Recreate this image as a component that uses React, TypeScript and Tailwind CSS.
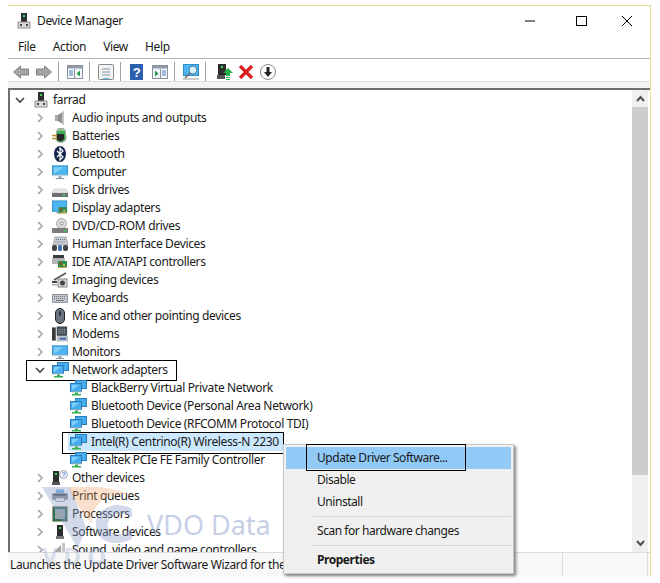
import type { ReactNode } from 'react';

const Pc = ({ base = '#8a8a8a' }: { base?: string }) => (
  <svg className="shrink-0" width="16" height="16" viewBox="0 0 16 16">
    <rect x="5" y="0" width="6" height="9" fill="#2f2f2f" />
    <rect x="7" y="2" width="2" height="2" fill="#3ddc5a" />
    <path d="M2 9h12v6H2z" fill="#d9d9d9" stroke={base} />
    <rect x="4" y="11" width="2" height="2" fill="#444" />
    <rect x="10" y="11" width="2" height="2" fill="#444" />
  </svg>
);
const Audio = () => (
  <svg width="16" height="16" viewBox="0 0 16 16">
    <rect x="3" y="5" width="3" height="6" fill="#a8a8a8" />
    <path d="M6 5l6-4v14l-6-4z" fill="#8f8f8f" />
    <path d="M10 2.500l2-1.500v14l-2-1.500z" fill="#c4c4c4" />
  </svg>
);
const Battery = () => (
  <svg width="16" height="16" viewBox="0 0 16 16">
    <path d="M5 2c0-2 8-2 8 0l1 8c0 5-9 6-10 1z" fill="#3fae52" stroke="#9a9a9a" />
    <path d="M5 6h7v5c-2 3-6 3-7 0z" fill="#262626" />
    <path d="M0 7.500h5M0 10.500h5" stroke="#b8942e" strokeWidth="1.500" />
    <path d="M5 2h8" stroke="#d8d8d8" />
  </svg>
);
const Bluetooth = () => (
  <svg width="16" height="16" viewBox="0 0 16 16">
    <ellipse cx="8" cy="8" rx="6" ry="8" fill="#12264d" />
    <path d="M5 5l6 6-3 3V2l3 3-6 6" fill="none" stroke="#fff" strokeWidth="1.200" />
  </svg>
);
const Monitor = () => (
  <svg width="17" height="16" viewBox="0 0 17 16">
    <rect x="0.500" y="1.500" width="16" height="10" fill="#4db6f2" stroke="#2f8fc9" />
    <path d="M2 3h10L2 10z" fill="#7fd0f8" />
    <rect x="0" y="11" width="17" height="1.500" fill="#c8d4dc" />
    <rect x="7" y="12.500" width="3" height="2" fill="#8d9aa3" />
    <rect x="4" y="14.500" width="9" height="1" fill="#7d8b94" />
  </svg>
);
const Disk = () => (
  <svg width="16" height="16" viewBox="0 0 16 16">
    <path d="M2 7h12l2 4H0z" fill="#e6e6e6" stroke="#bdbdbd" strokeWidth="0.500" />
    <rect x="0" y="11" width="16" height="4" fill="#6f6f6f" />
    <rect x="11" y="12" width="2" height="2" fill="#39d353" />
  </svg>
);
const Card = ({ x = 7, y = 8 }: { x?: number; y?: number }) => (
  <g>
    <rect x={x} y={y} width="9" height="6" fill="#2f8f55" />
    <rect x={x + 1} y={y + 1} width="3" height="3" fill="#7a5f22" />
    <rect x={x + 5} y={y + 3} width="2" height="2" fill="#c9b24a" />
    <rect x={x} y={y + 6} width="9" height="1" fill="#d0a93a" />
  </g>
);
const Display = () => (
  <svg width="17" height="16" viewBox="0 0 17 16">
    <rect x="0.500" y="0.500" width="15" height="11" fill="#4db6f2" stroke="#2f8fc9" />
    <rect x="5" y="12" width="5" height="2" fill="#8d9aa3" />
    <Card x={7} y={7} />
  </svg>
);
const Dvd = () => (
  <svg width="16" height="16" viewBox="0 0 16 16">
    <circle cx="9.500" cy="5.500" r="5" fill="#dcdcdc" stroke="#a5a5a5" />
    <circle cx="9.500" cy="5.500" r="1.500" fill="#fff" stroke="#888" />
    <rect x="0" y="10" width="16" height="5" fill="#7d7d7d" />
    <rect x="12" y="12" width="2" height="1.500" fill="#39d353" />
  </svg>
);
const Hid = () => (
  <svg width="16" height="16" viewBox="0 0 16 16">
    <path d="M3 1h11l2 8H1z" fill="#c8cdd3" stroke="#8d949c" strokeWidth="0.700" />
    <path d="M4 3.500h9M3.500 6h10" stroke="#6f757c" strokeDasharray="1 1" />
    <rect x="0" y="9" width="5" height="6" rx="2" fill="#444" />
    <rect x="6" y="9" width="4" height="6" rx="1.500" fill="#3f6fb5" />
    <rect x="11" y="9" width="5" height="6" rx="2" fill="#444" />
  </svg>
);
const Ide = () => (
  <svg width="16" height="16" viewBox="0 0 16 16">
    <path d="M1 1h11v3H1z" fill="#3a3a3a" />
    <rect x="0" y="4" width="13" height="6" fill="#b5b5b5" />
    <Card x={6} y={7} />
  </svg>
);
const Imaging = () => (
  <svg width="16" height="16" viewBox="0 0 16 16">
    <path d="M2 8L14 1" stroke="#555" strokeWidth="1.500" />
    <rect x="0" y="9" width="5" height="2" fill="#3f3f3f" />
    <rect x="0" y="12" width="5" height="1.500" fill="#aaa" />
    <rect x="6" y="7" width="9" height="8" fill="#d8d8d8" stroke="#888" />
    <circle cx="10.500" cy="11" r="2.500" fill="#444" />
  </svg>
);
const Keyboard = () => (
  <svg width="16" height="16" viewBox="0 0 16 16">
    <path d="M0.500 4.500h15v8h-15z" fill="#c4c9cf" stroke="#8d949c" />
    <path d="M2 6.500h12M2 8.500h12" stroke="#72777d" strokeDasharray="1 1" />
    <path d="M4 10.500h8" stroke="#72777d" />
  </svg>
);
const Mouse = () => (
  <svg width="16" height="16" viewBox="0 0 16 16">
    <rect x="3.500" y="0.500" width="9" height="15" rx="4.500" fill="#6d7680" stroke="#222" />
    <rect x="7" y="3" width="2" height="5" rx="1" fill="#2f3338" />
  </svg>
);
const Modem = () => (
  <svg width="17" height="16" viewBox="0 0 17 16">
    <path d="M0 1h4v14H0z" fill="#3a3a3a" />
    <rect x="5" y="0" width="11" height="10" fill="#3f4a54" />
    <path d="M7 3h7M7 5h7M7 7h7" stroke="#b9c2ca" strokeDasharray="1 1" />
    <rect x="5" y="10" width="12" height="6" fill="#bcc3c9" />
    <rect x="8" y="12" width="7" height="2" fill="#3b6aa8" />
  </svg>
);
const Network = () => (
  <svg className="shrink-0" width="17" height="16" viewBox="0 0 17 16">
    <rect x="5.500" y="0.500" width="11" height="8" fill="#46aef0" stroke="#2a7db8" />
    <rect x="0.500" y="3.500" width="11" height="8" fill="#46aef0" stroke="#2a7db8" />
    <path d="M2 5h7L2 10z" fill="#7fd0f8" />
    <rect x="1" y="11.500" width="11" height="1" fill="#c8d4dc" />
    <rect x="5" y="12.500" width="3" height="1.500" fill="#35b04a" />
    <rect x="2" y="14" width="9" height="1.500" fill="#35b04a" />
  </svg>
);
const Other = () => (
  <svg width="16" height="16" viewBox="0 0 16 16">
    <rect x="1" y="1" width="6" height="11" fill="#2f2f2f" />
    <rect x="3" y="3" width="2" height="2" fill="#3ddc5a" />
    <rect x="0" y="12" width="8" height="3" fill="#555" />
    <circle cx="11.500" cy="4.500" r="4" fill="#eef3fa" stroke="#9aa6b5" />
    <text x="11.500" y="7" fontSize="7" textAnchor="middle" fill="#2d5ea8" fontFamily="Liberation Sans, sans-serif">?</text>
  </svg>
);
const Printer = () => (
  <svg width="17" height="16" viewBox="0 0 17 16">
    <rect x="4" y="1" width="9" height="4" fill="#6fb4e0" />
    <rect x="0" y="5" width="17" height="7" fill="#8b9096" />
    <rect x="2" y="6" width="13" height="1.500" fill="#3b3f44" />
    <rect x="4" y="10" width="9" height="4" fill="#f2f2f2" stroke="#777" strokeWidth="0.600" />
  </svg>
);
const Cpu = () => (
  <svg width="16" height="16" viewBox="0 0 16 16">
    <rect x="0.500" y="0.500" width="15" height="15" fill="#2f6f66" stroke="#b89a3a" strokeDasharray="1 1" />
    <rect x="3" y="3" width="10" height="10" fill="#9aa7a5" />
  </svg>
);
const Software = () => (
  <svg width="16" height="16" viewBox="0 0 16 16">
    <rect x="5" y="1" width="6" height="11" fill="#2b2b2b" />
    <rect x="7" y="3" width="2" height="2" fill="#3ddc5a" />
    <rect x="4" y="12" width="8" height="3" fill="#777" />
  </svg>
);
const Sound = () => (
  <svg width="16" height="16" viewBox="0 0 16 16">
    <path d="M3 9l6-6v12H3z" fill="#a5a5a5" />
    <rect x="10" y="1" width="3" height="14" fill="#c7c7c7" />
  </svg>
);

const Chevron = ({ open }: { open?: boolean }) => (
  <svg width="10" height="10" viewBox="0 0 10 10" fill="none" stroke={open ? '#444' : '#a6a6a6'} strokeWidth="1.600">
    {open ? <path d="M1 3l4 4 4-4" /> : <path d="M3 1l4 4-4 4" />}
  </svg>
);

const categories: [string, ReactNode][] = [
  ['Audio inputs and outputs', <Audio />],
  ['Batteries', <Battery />],
  ['Bluetooth', <Bluetooth />],
  ['Computer', <Monitor />],
  ['Disk drives', <Disk />],
  ['Display adapters', <Display />],
  ['DVD/CD-ROM drives', <Dvd />],
  ['Human Interface Devices', <Hid />],
  ['IDE ATA/ATAPI controllers', <Ide />],
  ['Imaging devices', <Imaging />],
  ['Keyboards', <Keyboard />],
  ['Mice and other pointing devices', <Mouse />],
  ['Modems', <Modem />],
  ['Monitors', <Monitor />],
];
const adapters = [
  'BlackBerry Virtual Private Network',
  'Bluetooth Device (Personal Area Network)',
  'Bluetooth Device (RFCOMM Protocol TDI)',
  'Intel(R) Centrino(R) Wireless-N 2230',
  'Realtek PCIe FE Family Controller',
];
const after: [string, ReactNode][] = [
  ['Other devices', <Other />],
  ['Print queues', <Printer />],
  ['Processors', <Cpu />],
  ['Software devices', <Software />],
  ['Sound, video and game controllers', <Sound />],
];

const Row = ({ icon, label, open }: { icon: ReactNode; label: string; open?: boolean }) => (
  <div className="flex h-[18px] items-center pl-[19px]">
    <span className="flex w-[21px] justify-center">
      <Chevron open={open} />
    </span>
    <span className="ml-[2px] flex w-[16px] justify-center">{icon}</span>
    <span className="ml-[4px] whitespace-nowrap">{label}</span>
  </div>
);

const Sep = () => <div className="mr-[8px] ml-[6px] h-[20px] w-px bg-[#a0a0a0]" />;

export default function App() {
  return (
    <div className="relative h-[583px] w-[660px] overflow-hidden bg-white pt-[5px] pl-2 text-[12px] tracking-[-0.36px] text-[#1a1a1a] [font-family:'Noto_Sans',sans-serif]">
      <div className="flex h-[571px] w-[643px] flex-col border-t border-r border-[#ecdf8f]">
        <div className="flex h-[29px] items-center pl-2">
          <Pc />
          <span className="ml-[5px]">Device Manager</span>
          <div className="ml-auto flex items-center">
            <svg width="46" height="12" viewBox="0 0 46 12"><path d="M13 6h10" stroke="#000" /></svg>
            <svg width="46" height="12" viewBox="0 0 46 12"><rect x="18.500" y="1.500" width="10" height="9" fill="none" stroke="#000" /></svg>
            <svg width="46" height="12" viewBox="0 0 46 12"><path d="M18 1l10 10M28 1L18 11" stroke="#000" /></svg>
          </div>
        </div>
        <div className="flex h-[23px] items-center gap-[17px] pl-[10px]">
          <span>File</span>
          <span>Action</span>
          <span>View</span>
          <span>Help</span>
        </div>
        <div className="flex h-[23px] items-center border-t border-[#b5b5b5] pt-[3px] pl-[5px]">
          <svg width="39" height="16" viewBox="0 0 39 16">
            <path d="M0.500 8l7-6v3h8v6h-8v3z" fill="#a4a4a4" stroke="#808080" />
            <path d="M38.500 8l-7-6v3h-8v6h8v3z" fill="#a4a4a4" stroke="#808080" />
          </svg>
          <Sep />
          <svg width="16" height="16" viewBox="0 0 16 16">
            <rect x="0.500" y="1.500" width="15" height="13" fill="#f2f6fa" stroke="#8a9098" />
            <rect x="1" y="2" width="14" height="2.500" fill="#8f9dab" />
            <path d="M7.500 5v9" stroke="#8a9098" />
            <path d="M2 7h4M2 9h4M2 11h4" stroke="#4a7fb5" />
            <path d="M13 6.500v6L9.500 9.500z" fill="#1f9e43" />
          </svg>
          <Sep />
          <svg width="16" height="16" viewBox="0 0 16 16">
            <rect x="0.500" y="0.500" width="15" height="15" rx="1" fill="#f2f2f2" stroke="#8a8a8a" />
            <path d="M4 5h8M4 8h8M4 11h8" stroke="#8a9aa8" />
            <path d="M5 14.500h6" stroke="#4db6f2" />
          </svg>
          <Sep />
          <svg width="16" height="16" viewBox="0 0 16 16">
            <rect x="1" y="0" width="13" height="16" fill="#2c5fb0" />
            <text x="7.500" y="13" fontSize="13" fontWeight="700" textAnchor="middle" fill="#fff" fontFamily="Liberation Sans, sans-serif">?</text>
          </svg>
          <svg className="ml-[7px]" width="16" height="16" viewBox="0 0 16 16">
            <rect x="0.500" y="1.500" width="15" height="13" fill="#f2f6fa" stroke="#8a9098" />
            <rect x="1" y="2" width="14" height="2.500" fill="#8f9dab" />
            <path d="M8.500 5v9" stroke="#8a9098" />
            <path d="M10 7h4M10 9h4M10 11h4" stroke="#4a7fb5" />
            <path d="M3 6.500v6l3.500-3z" fill="#1f9e43" />
          </svg>
          <Sep />
          <svg width="16" height="16" viewBox="0 0 16 16">
            <rect x="0.500" y="0.500" width="15" height="11" fill="#4db6f2" stroke="#2f8fc9" />
            <circle cx="10" cy="6" r="4" fill="#d5f0fc" stroke="#4a7f9a" />
            <path d="M7 9l-5 5" stroke="#666" strokeWidth="1.500" />
            <path d="M0 15h16" stroke="#999" />
          </svg>
          <Sep />
          <svg className="ml-[3px]" width="16" height="16" viewBox="0 0 16 16">
            <rect x="1" y="0" width="8" height="11" fill="#2b2b2b" />
            <rect x="4" y="2" width="2" height="2" fill="#3ddc5a" />
            <rect x="0" y="11" width="8" height="4" fill="#555" />
            <path d="M11 4l5 5h-3v3H9V9H6z" fill="#1fb14a" />
            <path d="M9 13.500h4M9 15.500h4" stroke="#1fb14a" />
          </svg>
          <svg className="ml-[5px]" width="16" height="16" viewBox="0 0 16 16">
            <path d="M2 2l12 12M14 2L2 14" stroke="#d8201f" strokeWidth="3.200" />
          </svg>
          <svg className="ml-[5px]" width="18" height="18" viewBox="0 0 18 18">
            <circle cx="9" cy="9" r="7.500" fill="#fff" stroke="#8a8a8a" />
            <path d="M9 14l-4-5h2.500V4h3v5H13z" fill="#222" />
          </svg>
        </div>
        <div className="h-[7px] border-t border-[#dcdcdc] bg-[#f3f3f3]" />
        <div className="relative flex min-h-0 flex-1 overflow-hidden border-t-2 border-l-2 border-[#6e6e6e]">
          <div className="min-w-0 flex-1 pt-px">
            <div className="flex h-[18px] items-center">
              <span className="flex w-[20px] justify-center"><Chevron open /></span>
              <span className="ml-[3px]"><Pc /></span>
              <span className="ml-[4px]">farrad</span>
            </div>
            {categories.map(([label, icon]) => (
              <Row key={label} label={label} icon={icon} />
            ))}
            <div className="relative">
              <Row label="Network adapters" icon={<Network />} open />
              <div className="absolute top-[-1px] left-[16px] h-[21px] w-[151px] border border-black" />
            </div>
            {adapters.map((label) => {
              const selected = label.startsWith('Intel');
              return (
                <div key={label} className="relative flex h-[18px] items-center pl-[58px]">
                  <div className={selected ? 'flex h-[18px] w-[215px] items-center bg-[#cce8ff] pl-[2px]' : 'flex items-center pl-[2px]'}>
                    <Network />
                    <span className="ml-[4px] whitespace-nowrap">{label}</span>
                  </div>
                  {selected && <div className="absolute top-[-1px] left-[52px] h-[22px] w-[222px] border border-black" />}
                </div>
              );
            })}
            {after.map(([label, icon]) => (
              <Row key={label} label={label} icon={icon} />
            ))}
          </div>
          <div className="mr-[2px] flex w-[16px] flex-col bg-[#f0f0f0]">
            <div className="flex h-[17px] items-center justify-center">
              <svg width="9" height="7" viewBox="0 0 9 7" fill="none" stroke="#505050" strokeWidth="2"><path d="M1 6l3.500-4L8 6" /></svg>
            </div>
            <div className="h-[368px] bg-[#cdcdcd]" />
            <div className="flex-1" />
            <div className="flex h-[17px] items-center justify-center">
              <svg width="9" height="7" viewBox="0 0 9 7" fill="none" stroke="#505050" strokeWidth="2"><path d="M1 1l3.500 4L8 1" /></svg>
            </div>
          </div>
        </div>
        <div className="flex h-[24px] items-center border-t border-[#dcdcdc] bg-[#f8f8f8] pl-[2px]">
          <span className="w-[552px] overflow-hidden whitespace-nowrap">Launches the Update Driver Software Wizard for the selected device.</span>
          <div className="h-full w-px bg-[#dcdcdc]" />
          <div className="ml-[84px] h-full w-px bg-[#dcdcdc]" />
        </div>
      </div>

      {/* watermark */}
      <div className="pointer-events-none absolute top-[487px] left-[40px]">
        <svg width="100" height="70" viewBox="0 0 100 70">
          <path d="M2 0h28l16 40-8 22z" fill="#8fa0cc" opacity="0.4" />
          <path d="M28 0c18-3 42 0 64 8-22-4-40 6-40 28C40 25 34 12 28 0z" fill="#f0a060" opacity="0.32" />
          <path d="M92 22C80 14 58 18 56 36c-2 16 16 26 36 16V42c-14 10-26 4-24-6 2-10 14-12 24-6z" fill="#8fa0cc" opacity="0.4" />
        </svg>
      </div>
      <div className="pointer-events-none absolute top-[507px] left-[147px] text-[27px] leading-[36px] tracking-normal text-[#8fa0cc] opacity-50">VDO Data</div>
      <div className="pointer-events-none absolute top-[543px] left-[42px] text-[24px] leading-[26px] font-bold tracking-[6px] text-[#8fa0cc] opacity-30">VDO</div>

      {/* context menu */}
      <div className="absolute top-[444px] left-[283px] w-[231px] border border-[#c8c8c8] bg-[#f0f0f0] p-[2px] tracking-[-0.45px] shadow-[2px_2px_3px_rgba(0,0,0,0.5)]">
        <div className="relative flex h-[22px] items-center bg-[#91c9f7] pl-[31px]">
          Update Driver Software...
          <div className="absolute top-[-3px] left-[20px] h-[27px] w-[160px] border border-black" />
        </div>
        <div className="flex h-[22px] items-center pl-[31px]">Disable</div>
        <div className="flex h-[22px] items-center pl-[31px]">Uninstall</div>
        <div className="my-[3px] ml-[27px] h-px bg-[#d4d4d4]" />
        <div className="flex h-[22px] items-center pl-[31px]">Scan for hardware changes</div>
        <div className="my-[3px] ml-[27px] h-px bg-[#d4d4d4]" />
        <div className="flex h-[22px] items-center pl-[31px] font-bold">Properties</div>
      </div>
    </div>
  );
}
